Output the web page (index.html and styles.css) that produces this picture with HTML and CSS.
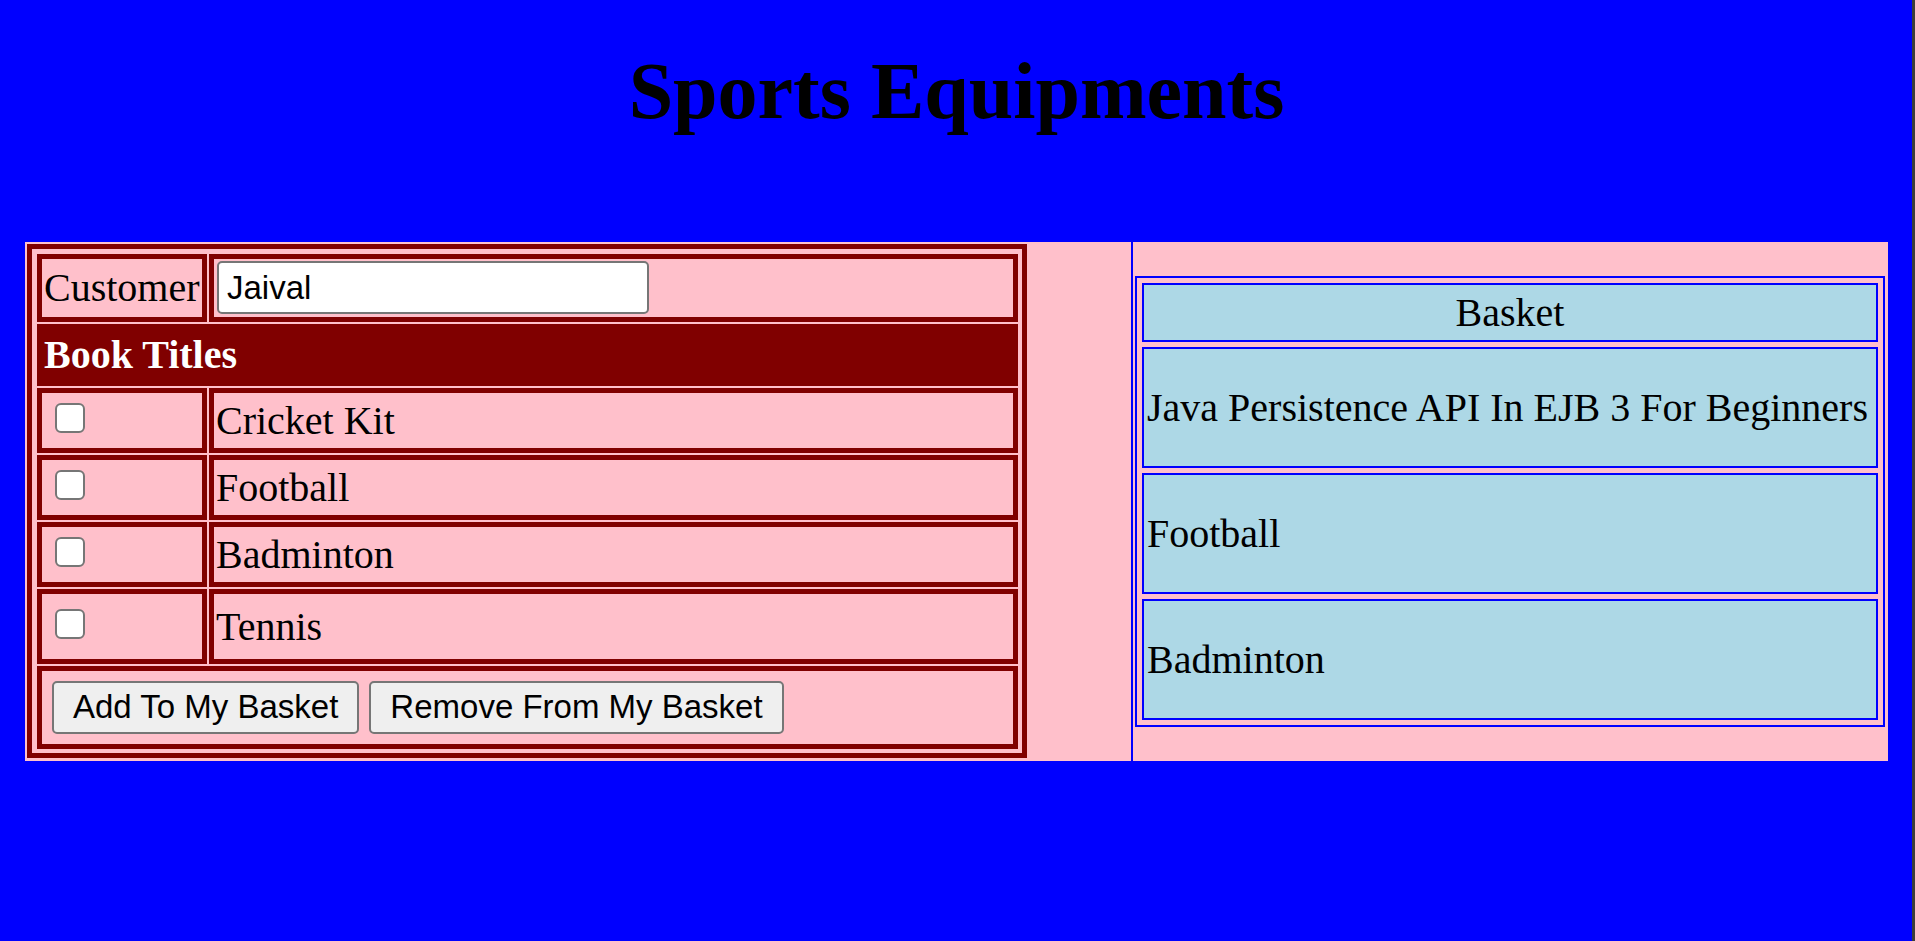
FILE: index.html
```html
<!DOCTYPE html>
<html lang="en">
<head>
<meta charset="utf-8">
<title>Sports Equipments</title>
<link rel="stylesheet" href="styles.css">
</head>
<body class="page">
<h1 class="title">Sports Equipments</h1>
<main class="panel">
  <form class="shop">
    <table class="order">
      <tr class="row-customer">
        <td class="narrow"><label for="customer">Customer</label></td>
        <td><input class="name" type="text" id="customer" value="Jaival"></td>
      </tr>
      <tr class="row-heading"><th colspan="2">Book Titles</th></tr>
      <tr class="row-item">
        <td><input class="tick" type="checkbox" id="cricket"></td>
        <td><label for="cricket">Cricket Kit</label></td>
      </tr>
      <tr class="row-item">
        <td><input class="tick" type="checkbox" id="football"></td>
        <td><label for="football">Football</label></td>
      </tr>
      <tr class="row-item">
        <td><input class="tick" type="checkbox" id="badminton"></td>
        <td><label for="badminton">Badminton</label></td>
      </tr>
      <tr class="row-last">
        <td><input class="tick" type="checkbox" id="tennis"></td>
        <td><label for="tennis">Tennis</label></td>
      </tr>
      <tr class="row-actions">
        <td colspan="2">
          <div class="actions">
            <button class="btn" type="button">Add To My Basket</button>
            <button class="btn" type="button">Remove From My Basket</button>
          </div>
        </td>
      </tr>
    </table>
  </form>
  <section class="side">
    <table class="basket">
      <tr class="basket-head"><th>Basket</th></tr>
      <tr class="basket-item"><td>Java Persistence API In EJB 3 For Beginners</td></tr>
      <tr class="basket-item"><td>Football</td></tr>
      <tr class="basket-item"><td>Badminton</td></tr>
    </table>
  </section>
</main>
</body>
</html>
```

FILE: styles.css
```css
* {
  box-sizing: border-box;
}

.page {
  margin: 0;
  min-height: 100vh;
  padding: 45px 24px 0 25px;
  border-right: 3px solid #3c3c3c;
  background: blue;
  color: black;
  font: 40px/46px "Liberation Serif", "Times New Roman", serif;
}

.title {
  margin: 0 0 105px;
  font-size: 80px;
  line-height: 92px;
  text-align: center;
}

.panel {
  display: flex;
  background: pink;
}

.shop {
  flex: 1;
  padding: 2px 2px 3px;
}

.order {
  width: calc(100% - 102px);
  padding: 3px 2px 2px 3px;
  border: 5px solid maroon;
  border-spacing: 2px;
}

.order td,
.order th {
  padding: 0 2px;
  border: 5px solid maroon;
  text-align: left;
}

.order .narrow {
  width: 170px;
}

.order label {
  display: block;
}

.row-customer {
  height: 68px;
}

.row-heading {
  height: 62px;
  background: maroon;
  color: white;
}

.row-item {
  height: 65px;
}

.row-last {
  height: 75px;
}

.row-actions {
  height: 83px;
}

.name {
  display: block;
  width: 432px;
  height: 53px;
  margin-left: 1px;
  margin-bottom: 1px;
  padding: 0 8px;
  border: 2px solid #767676;
  border-radius: 5px;
  background: white;
  font: 33px/38px "Liberation Sans", Arial, sans-serif;
}

.tick {
  appearance: none;
  display: block;
  width: 30px;
  height: 30px;
  margin: 0 0 5px 11px;
  border: 2px solid #767676;
  border-radius: 6px;
  background: white;
}

.tick:checked {
  background: #0075ff;
}

.actions {
  display: flex;
  gap: 10px;
  padding: 0 8px;
}

.btn {
  height: 53px;
  padding: 0 19px 2px;
  border: 2px solid #767676;
  border-radius: 5px;
  background: #efefef;
  color: black;
  font: 33px/38px "Liberation Sans", Arial, sans-serif;
}

.side {
  display: flex;
  align-items: center;
  padding: 0 3px 0 2px;
  border-left: 2px solid blue;
}

.basket {
  border: 2px solid blue;
  border-spacing: 5px;
  white-space: nowrap;
}

.basket td,
.basket th {
  padding: 0 8px 0 3px;
  border: 2px solid blue;
  background: lightblue;
  font-weight: normal;
}

.basket th {
  padding: 0 3px;
}

.basket-head {
  height: 59px;
}

.basket-item {
  height: 121px;
}
```
